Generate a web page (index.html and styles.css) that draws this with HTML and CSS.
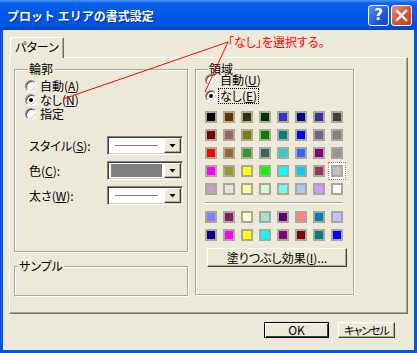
FILE: index.html
```html
<!DOCTYPE html>
<html lang="ja">
<head>
    <meta charset="UTF-8">
    <title>プロット エリアの書式設定</title>
    <link rel="stylesheet" href="styles.css">
</head>
<body>
    <div class="window">
        <div class="titlebar">
            <span class="title">プロット エリアの書式設定</span>
            <div class="caption-buttons">
                <span class="cap-btn help">?</span>
                <span class="cap-btn close">
                    <svg width="13" height="13" viewBox="0 0 13 13">
                        <path d="M2 2 L11 11 M11 2 L2 11" stroke="#fff" stroke-width="2.4" stroke-linecap="square"/>
                    </svg>
                </span>
            </div>
        </div>

        <div class="client">
            <div class="tabs">
                <span class="tab">パターン</span>
            </div>
            <div class="panel">
                <div class="col-left">
                    <div class="group outline">
                        <span class="group-title">輪郭</span>
                        <div class="radios">
                            <div class="radio"><span class="dot"></span><span class="radio-text">自動(<u>A</u>)</span></div>
                            <div class="radio"><span class="dot checked"></span><span class="radio-text">なし(<u>N</u>)</span></div>
                            <div class="radio"><span class="dot"></span><span class="radio-text">指定</span></div>
                        </div>
                        <div class="field first">
                            <span class="field-label">スタイル(<u>S</u>):</span>
                            <div class="combo"><span class="combo-value line"></span><span class="combo-btn"></span></div>
                        </div>
                        <div class="field">
                            <span class="field-label">色(<u>C</u>):</span>
                            <div class="combo"><span class="combo-value fill"></span><span class="combo-btn"></span></div>
                        </div>
                        <div class="field">
                            <span class="field-label">太さ(<u>W</u>):</span>
                            <div class="combo"><span class="combo-value line"></span><span class="combo-btn"></span></div>
                        </div>
                    </div>
                    <div class="group sample">
                        <span class="group-title">サンプル</span>
                    </div>
                </div>

                <div class="group area">
                    <span class="group-title">領域</span>
                    <div class="radios tall">
                        <div class="radio"><span class="dot"></span><span class="radio-text">自動(<u>U</u>)</span></div>
                        <div class="radio"><span class="dot checked"></span><span class="radio-text focused">なし(<u>E</u>)</span></div>
                    </div>
                    <div class="palette" id="mainPalette"></div>
                    <div class="separator"></div>
                    <div class="palette" id="chartPalette"></div>
                    <button class="btn fill-effects">塗りつぶし効果(<u>I</u>)...</button>
                </div>
            </div>

            <div class="buttons">
                <button class="btn default">OK</button>
                <button class="btn cancel">キャンセル</button>
            </div>
        </div>

        <!-- callout drawn over the dialog -->
        <svg class="callout-lines" width="417" height="353">
            <path d="M228 42 L63 99 M228 42 L205 92" stroke="#ff0000" stroke-width="1" fill="none"/>
        </svg>
        <span class="callout">「なし」を選択する。</span>
    </div>

    <script>
        const mainColors = [
            ['#000000', '#663300', '#333300', '#003300', '#3333cc', '#000080', '#333399', '#404040'],
            ['#800000', '#996666', '#808000', '#008000', '#008080', '#0000ff', '#666699', '#808080'],
            ['#ff0000', '#996633', '#339933', '#336666', '#33cccc', '#3366ff', '#800080', '#969696'],
            ['#ff00ff', '#999933', '#ffff00', '#00ff00', '#00ffff', '#00ccff', '#993366', '#c0c0c0'],
            ['#cc99cc', '#e3e3e3', '#ffff99', '#ccffcc', '#66ffff', '#a6caf0', '#cc99ff', '#ffffff']
        ];
        const chartColors = [
            ['#8080ff', '#802060', '#ffffcc', '#a0e0e0', '#600080', '#ff8080', '#0080c0', '#c0c0ff'],
            ['#000080', '#ff00ff', '#ffff00', '#00ffff', '#800080', '#800000', '#008080', '#0000ff']
        ];

        function fillPalette(id, rows, selected) {
            const box = document.getElementById(id);
            rows.forEach((row, r) => {
                row.forEach((color, c) => {
                    const swatch = document.createElement('span');
                    swatch.className = 'swatch';
                    if (selected && selected[0] === r && selected[1] === c) {
                        swatch.classList.add('selected');
                    }
                    swatch.style.background = color;
                    box.appendChild(swatch);
                });
            });
        }

        fillPalette('mainPalette', mainColors, [3, 7]);
        fillPalette('chartPalette', chartColors);
    </script>
</body>
</html>
```

FILE: styles.css
```css
* {
    box-sizing: border-box;
}
body {
    margin: 0;
    font-family: "Noto Sans CJK JP", sans-serif;
    font-size: 12px;
    font-feature-settings: "palt";
    color: #000;
    background: #fff;
}
u {
    text-decoration-thickness: 1px;
    text-underline-offset: 1px;
}

/* window frame */
.window {
    position: relative;
    width: 417px;
    height: 353px;
    display: flex;
    flex-direction: column;
    background: #0a55e0;
}
.titlebar {
    height: 30px;
    display: flex;
    align-items: center;
    justify-content: space-between;
    padding: 0 5px 0 7px;
    background: linear-gradient(#4f9bff 0, #0c62ec 3px, #0057e8 45%, #0054e3 80%, #0048cc 100%);
}
.title {
    color: #fff;
    font-weight: bold;
    font-size: 12px;
    font-feature-settings: normal;
    text-shadow: 1px 1px #0b2a8a;
}
.caption-buttons {
    display: flex;
    gap: 2px;
}
.cap-btn {
    width: 21px;
    height: 21px;
    border: 1px solid #fff;
    border-radius: 3px;
    display: flex;
    align-items: center;
    justify-content: center;
}
.help {
    background: linear-gradient(135deg, #5d93f8, #1d55e0 60%, #1846c8);
    color: #fff;
    font: bold 15px "DejaVu Sans", sans-serif;
}
.close {
    background: linear-gradient(135deg, #ec9276, #d9512c 55%, #c53f1a);
}
.client {
    flex: 1;
    margin: 0 3px 3px;
    background: #ece9d8;
    padding: 7px 6px 0;
}

/* tab */
.tabs {
    display: flex;
    padding-left: 1px;
    margin-bottom: -1px;
    position: relative;
    z-index: 1;
}
.tab {
    width: 54px;
    height: 21px;
    background: #ece9d8;
    border-top: 1px solid #fff;
    border-left: 1px solid #fff;
    border-right: 1px solid #716f64;
    box-shadow: inset -1px 0 #aca899;
    border-radius: 2px 2px 0 0;
    text-align: center;
    line-height: 18px;
}
.panel {
    height: 257px;
    border-top: 1px solid #fff;
    border-left: 1px solid #fff;
    border-right: 1px solid #716f64;
    border-bottom: 1px solid #716f64;
    box-shadow: inset -1px -1px #aca899;
    display: flex;
    align-items: flex-start;
    gap: 7px;
    padding: 11px 0 0 4px;
}

/* group boxes */
.col-left {
    display: flex;
    flex-direction: column;
    gap: 14px;
}
.group {
    border: 1px solid #aca899;
    box-shadow: inset 1px 1px #fff, 1px 1px #fff;
}
.group-title {
    display: block;
    width: fit-content;
    height: 14px;
    line-height: 14px;
    margin: -8px 0 -6px 3px;
    padding: 0 1px;
    background: #ece9d8;
}
.outline {
    width: 174px;
    height: 183px;
    padding-left: 10px;
}
.sample {
    width: 174px;
    height: 30px;
}
.area {
    width: 159px;
    height: 226px;
    padding-left: 9px;
}

/* radio buttons */
.radios {
    margin-top: 9px;
}
.radios.tall {
    margin-top: 2px;
}
.radio {
    height: 14px;
    display: flex;
    align-items: center;
    gap: 2px;
}
.tall .radio {
    height: 16px;
}
.radio-text {
    padding: 0 1px;
    line-height: 14px;
}
.radio-text.focused {
    outline: 1px dotted #000;
}
.dot {
    width: 12px;
    height: 12px;
    border-radius: 50%;
    background: #fff;
    border: 1px solid;
    border-color: #8d8a7a #fff #fff #8d8a7a;
    box-shadow: inset 1px 1px #505050, inset -1px -1px #d4d0c8;
    display: flex;
    align-items: center;
    justify-content: center;
}
.dot.checked::after {
    content: "";
    width: 4px;
    height: 4px;
    border-radius: 50%;
    background: #000;
}

/* line style combos */
.field {
    height: 19px;
    display: flex;
    align-items: center;
    margin: 6px 0 0 4px;
}
.field.first {
    margin-top: 15px;
}
.field-label {
    width: 78px;
}
.combo {
    width: 76px;
    height: 19px;
    display: flex;
    padding: 1px;
    background: #fff;
    border: 1px solid;
    border-color: #808080 #fff #fff #808080;
    box-shadow: inset 1px 1px #404040, inset -1px -1px #d4d0c8;
}
.combo-value {
    flex: 1;
    display: flex;
    align-items: center;
}
.combo-value.line::before {
    content: "";
    flex: 1;
    height: 1px;
    margin: 0 6px;
    background: #808080;
}
.combo-value.fill::before {
    content: "";
    flex: 1;
    align-self: stretch;
    margin: 1px 2px;
    background: #808080;
}
.combo-btn {
    width: 17px;
    height: 15px;
    display: flex;
    align-items: center;
    justify-content: center;
    background: #ece9d8;
    border: 1px solid;
    border-color: #fff #404040 #404040 #fff;
    box-shadow: inset -1px -1px #aca899;
}
.combo-btn::before {
    content: "";
    width: 7px;
    height: 4px;
    background: #000;
    clip-path: polygon(0 0, 100% 0, 50% 100%);
}

/* color palette */
.palette {
    display: grid;
    grid-template-columns: repeat(8, 12px);
    gap: 6px;
}
#mainPalette {
    margin-top: 7px;
}
.swatch {
    width: 12px;
    height: 12px;
    border: 2px solid #aca899;
}
.swatch.selected {
    box-shadow: 0 0 0 3px #fff;
    outline: 1px dotted #8a8878;
    outline-offset: 2px;
}
.separator {
    width: 138px;
    height: 2px;
    margin: 7px 0;
    border-top: 1px solid #aca899;
    border-bottom: 1px solid #fff;
}

/* push buttons */
.btn {
    font-family: inherit;
    font-size: 12px;
    font-feature-settings: "palt";
    color: #000;
    background: #ece9d8;
    border: 1px solid;
    border-color: #fff #404040 #404040 #fff;
    box-shadow: inset -1px -1px #aca899;
    padding: 0;
    line-height: 14px;
}
.fill-effects {
    display: block;
    width: 140px;
    height: 19px;
    margin: 7px 0 0 2px;
}
.buttons {
    display: flex;
    justify-content: flex-end;
    gap: 9px;
    margin-top: 8px;
    padding-right: 13px;
}
.buttons .btn {
    height: 16px;
}
.btn.default {
    width: 65px;
    border: 1px solid #000;
    box-shadow: inset 1px 1px #fff, inset -1px -1px #404040;
}
.btn.cancel {
    width: 57px;
    font-size: 11px;
    letter-spacing: -1px;
}

/* red annotation */
.callout-lines {
    position: absolute;
    left: 0;
    top: 0;
    pointer-events: none;
}
.callout {
    position: absolute;
    left: 228px;
    top: 35px;
    color: #ff0000;
    line-height: 14px;
}
```
